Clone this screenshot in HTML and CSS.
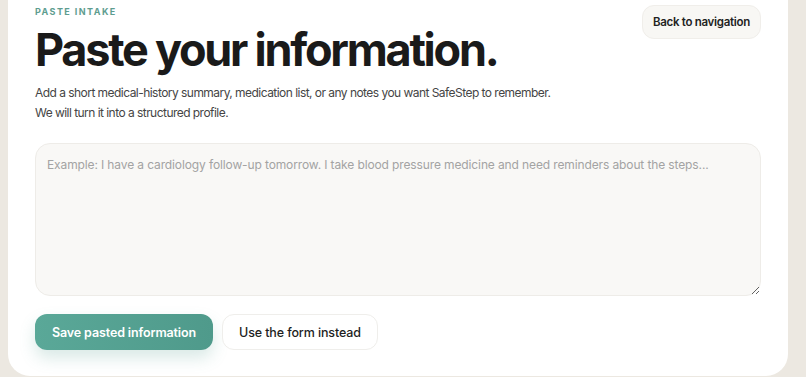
FILE: index.html
```html
<!DOCTYPE html>
<html lang="en">
<head>
    <meta charset="UTF-8">
    <meta name="viewport" content="width=device-width, initial-scale=1.0">
    <title>Paste intake</title>
    <link rel="stylesheet" href="styles.css">
</head>
<body>
    <div class="card">
        <div class="top">
            <div class="intro">
                <div class="eyebrow">PASTE INTAKE</div>
                <h1 class="title">Paste your information.</h1>
                <p class="lead">Add a short medical-history summary, medication list, or any notes you want SafeStep to remember.<br>We will turn it into a structured profile.</p>
            </div>
            <button class="back">Back to navigation</button>
        </div>
        <textarea class="paste" placeholder="Example: I have a cardiology follow-up tomorrow. I take blood pressure medicine and need reminders about the steps..."></textarea>
        <div class="actions">
            <button class="save">Save pasted information</button>
            <button class="alt">Use the form instead</button>
        </div>
    </div>
</body>
</html>
```

FILE: styles.css
```css
body{
    margin: 0;
    background: #ece8e1;
    font-family: Inter, "Noto Sans", sans-serif;
    color: #1c1c1c;
    overflow: hidden;
}
.card{
    margin: -30px 18px 0 8px;
    height: 406px;
    box-sizing: border-box;
    background: #ffffff;
    border-radius: 22px;
    padding: 36px 27px 0 27px;
}
.top{
    display: flex;
    justify-content: space-between;
    align-items: flex-start;
}
.eyebrow{
    font-size: 9px;
    font-weight: 700;
    letter-spacing: 0.16em;
    color: #5e9d8f;
    line-height: 12px;
}
.title{
    margin: 4px 0 0 0;
    font-size: 45px;
    font-weight: 700;
    letter-spacing: -0.05em;
    line-height: 56px;
    color: #1a1a1a;
}
.lead{
    margin: 5px 0 0 0;
    font-size: 12px;
    letter-spacing: -0.045em;
    line-height: 20px;
    color: #454545;
}
.back{
    margin-top: -1px;
    font-family: inherit;
    font-size: 11.5px;
    font-weight: 600;
    letter-spacing: -0.025em;
    color: #222;
    background: #f8f7f4;
    border: 1px solid #f0eeea;
    border-radius: 12px;
    padding: 0 10px;
    height: 34px;
}
.paste{
    display: block;
    margin-top: 20px;
    width: 100%;
    height: 153px;
    box-sizing: border-box;
    background: #f9f8f6;
    border: 1px solid #eeece8;
    border-radius: 15px;
    padding: 13px 11px;
    font-family: inherit;
    font-size: 12px;
    letter-spacing: -0.01em;
    color: #333;
    resize: vertical;
}
.paste::placeholder{
    color: #a3a3a3;
}
.actions{
    display: flex;
    gap: 9px;
    margin-top: 18px;
}
.save{
    font-family: inherit;
    font-size: 12.5px;
    font-weight: 600;
    letter-spacing: -0.01em;
    color: #fff;
    background: linear-gradient(90deg, #5aa898, #4f9a8b);
    border: none;
    border-radius: 12px;
    height: 36px;
    padding: 0 17px;
    box-shadow: 0 8px 16px rgba(80, 154, 139, 0.22);
}
.alt{
    font-family: inherit;
    font-size: 12.5px;
    font-weight: 500;
    letter-spacing: -0.01em;
    color: #1e1e1e;
    background: #fff;
    border: 1px solid #efeeeb;
    border-radius: 12px;
    height: 36px;
    padding: 0 16px;
}
```
